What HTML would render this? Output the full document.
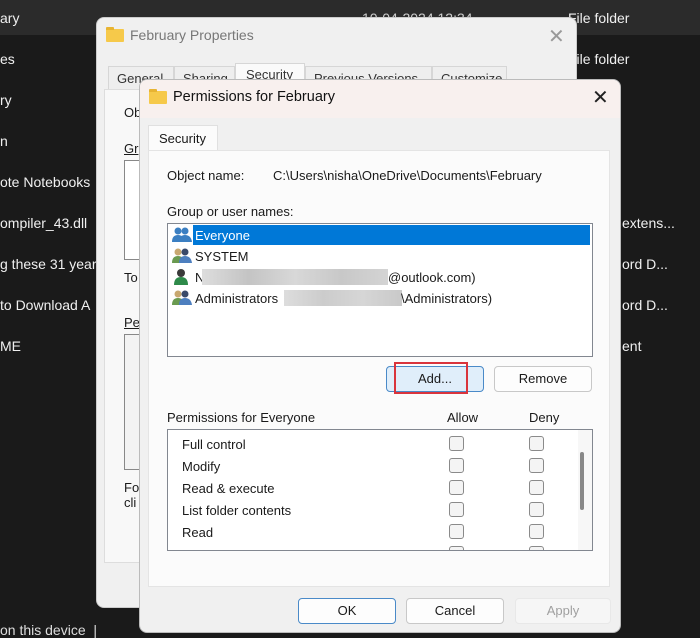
<!DOCTYPE html>
<html><head><meta charset="utf-8">
<style>
*{margin:0;padding:0;box-sizing:border-box}
body{width:700px;height:637px;overflow:hidden;background:#1a1a1a;font-family:"Liberation Sans",sans-serif;font-size:13px;color:#1a1a1a;position:relative}
.a{position:absolute;white-space:nowrap}
.bg{color:#f0f0f0;font-size:14px}
.btn{position:absolute;height:26px;border:1px solid #c8c8c8;border-radius:4px;background:#fdfdfd;text-align:center;line-height:24px;font-size:13px}
.cb{position:absolute;width:15px;height:15px;border:1px solid #8a8a8a;border-radius:3px;background:#f4f4f4}
.fold{position:absolute;width:18px;height:13px;background:#f6c94a;border-radius:1px}
.fold:before{content:"";position:absolute;left:0;top:-2px;width:8px;height:3px;background:#e8b432;border-radius:1px 1px 0 0}
</style></head><body>
<!-- explorer background -->
<div class="a" style="left:0;top:0;width:700px;height:35px;background:#2b2b2b"></div>
<div class="a bg" style="left:0;top:10px">ary</div>
<div class="a bg" style="left:362px;top:10px;color:#ccc">10-04-2024 12:34</div>
<div class="a bg" style="left:568px;top:10px">File folder</div>
<div class="a bg" style="left:0;top:51px">es</div>
<div class="a bg" style="left:568px;top:51px">File folder</div>
<div class="a bg" style="left:0;top:92px">ry</div>
<div class="a bg" style="left:0;top:133px">n</div>
<div class="a bg" style="left:0;top:174px">ote Notebooks</div>
<div class="a bg" style="left:0;top:215px">ompiler_43.dll</div>
<div class="a bg" style="left:622px;top:215px">extens...</div>
<div class="a bg" style="left:0;top:256px">g these 31 year</div>
<div class="a bg" style="left:622px;top:256px">ord D...</div>
<div class="a bg" style="left:0;top:297px">to Download A</div>
<div class="a bg" style="left:622px;top:297px">ord D...</div>
<div class="a bg" style="left:0;top:338px">ME</div>
<div class="a bg" style="left:622px;top:338px">ent</div>
<div class="a bg" style="left:0;top:622px;color:#ddd">on this device &nbsp;|</div>

<!-- Properties window -->
<div class="a" style="left:96px;top:17px;width:481px;height:591px;background:#f0f0f0;border-radius:8px;border:1px solid #ccc"></div>
<div class="fold" style="left:106px;top:29px"></div>
<div class="a" style="left:130px;top:27px;font-size:14px;color:#777">February Properties</div>
<div class="a" style="left:548px;top:24px;font-size:20px;color:#999">✕</div>
<div class="a" style="left:108px;top:66px;width:66px;height:24px;border:1px solid #d6d6d6;background:#eee;padding:4px 8px;color:#333">General</div>
<div class="a" style="left:174px;top:66px;width:61px;height:24px;border:1px solid #d6d6d6;background:#eee;padding:4px 8px;color:#333">Sharing</div>
<div class="a" style="left:235px;top:63px;width:70px;height:28px;border:1px solid #d6d6d6;background:#fafafa;padding:3px 10px;color:#333">Security</div>
<div class="a" style="left:305px;top:66px;width:127px;height:24px;border:1px solid #d6d6d6;background:#eee;padding:4px 8px;color:#333">Previous Versions</div>
<div class="a" style="left:432px;top:66px;width:75px;height:24px;border:1px solid #d6d6d6;background:#eee;padding:4px 8px;color:#333">Customize</div>
<div class="a" style="left:104px;top:89px;width:460px;height:474px;background:#f8f8f8;border:1px solid #ddd"></div>
<div class="a" style="left:124px;top:105px">Ob</div>
<div class="a" style="left:124px;top:141px;text-decoration:underline">Gr</div>
<div class="a" style="left:124px;top:160px;width:30px;height:100px;border:1px solid #888;background:#fff"></div>
<div class="a" style="left:124px;top:270px">To</div>
<div class="a" style="left:124px;top:315px;text-decoration:underline">Pe</div>
<div class="a" style="left:124px;top:334px;width:30px;height:136px;border:1px solid #888;background:#f3f3f3"></div>
<div class="a" style="left:124px;top:480px;line-height:15px">Fo<br>cli</div>

<!-- Permissions dialog -->
<div class="a" style="left:139px;top:79px;width:482px;height:554px;background:#f0f0f0;border-radius:8px;border:1px solid #bbb;overflow:hidden">
 <div style="position:absolute;left:0;top:0;width:100%;height:38px;background:#f8f0ee"></div>
</div>
<div class="fold" style="left:149px;top:91px"></div>
<div class="a" style="left:173px;top:89px;font-size:14.5px;color:#111">Permissions for February</div>
<div class="a" style="left:592px;top:85px;font-size:20px;color:#222">✕</div>
<div class="a" style="left:148px;top:125px;width:70px;height:26px;background:#fbfbfb;border:1px solid #e0e0e0;border-bottom:none;padding:5px 10px">Security</div>
<div class="a" style="left:148px;top:150px;width:462px;height:437px;background:#fbfbfb;border:1px solid #e4e4e4"></div>
<div class="a" style="left:167px;top:168px">Object name:</div>
<div class="a" style="left:273px;top:168px">C:\Users\nisha\OneDrive\Documents\February</div>
<div class="a" style="left:167px;top:204px">Group or user names:</div>
<div class="a" style="left:167px;top:223px;width:426px;height:134px;border:1px solid #828790;background:#fff"></div>
<div class="a" style="left:193px;top:225px;width:397px;height:20px;background:#0078d7"></div>
<svg class="a" style="left:172px;top:226px" width="20" height="82" viewBox="0 0 20 82">
 <g fill="#3b7fc2"><circle cx="6" cy="5" r="3.5"/><circle cx="13" cy="5" r="3.5"/><path d="M0 16q0-7 6-7t6 7zM7 16q0-7 6-7t7 7z"/></g>
 <g><circle cx="6" cy="26" r="3.5" fill="#c8a870"/><circle cx="13" cy="26" r="3.5" fill="#3a4a6a"/><path d="M0 37q0-7 6-7t6 7z" fill="#6a9a50"/><path d="M7 37q0-7 6-7t7 7z" fill="#4d7fbf"/></g>
 <g><circle cx="9" cy="47" r="4" fill="#3a3a3a"/><path d="M2 59q0-8 7-8t7 8z" fill="#2e8a4a"/></g>
 <g><circle cx="6" cy="68" r="3.5" fill="#c8a870"/><circle cx="13" cy="68" r="3.5" fill="#3a4a6a"/><path d="M0 79q0-7 6-7t6 7z" fill="#6a9a50"/><path d="M7 79q0-7 6-7t7 7z" fill="#4d7fbf"/></g>
</svg>
<div class="a" style="left:195px;top:228px;color:#fff">Everyone</div>
<div class="a" style="left:195px;top:249px">SYSTEM</div>
<div class="a" style="left:195px;top:270px">N</div>
<div class="a" style="left:202px;top:269px;width:186px;height:16px;background:linear-gradient(90deg,#ddd,#c4c4c4,#d8d8d8,#c8c8c8,#d4d4d4)"></div>
<div class="a" style="left:388px;top:270px">@outlook.com)</div>
<div class="a" style="left:195px;top:291px">Administrators</div>
<div class="a" style="left:284px;top:290px;width:118px;height:16px;background:linear-gradient(90deg,#ddd,#ccc,#d6d6d6,#c9c9c9)"></div>
<div class="a" style="left:401px;top:291px">\Administrators)</div>
<div class="btn" style="left:386px;top:366px;width:98px;background:#e0eefa;border-color:#4a8ac8">Add...</div>
<div class="a" style="left:394px;top:362px;width:74px;height:32px;border:2px solid #d9343c"></div>
<div class="btn" style="left:494px;top:366px;width:98px">Remove</div>
<div class="a" style="left:167px;top:410px">Permissions for Everyone</div>
<div class="a" style="left:447px;top:410px">Allow</div>
<div class="a" style="left:529px;top:410px">Deny</div>
<div class="a" style="left:167px;top:429px;width:426px;height:122px;border:1px solid #828790;background:#fff;overflow:hidden">
 <div style="position:absolute;left:410px;top:0;width:15px;height:120px;background:#f7f7f7"></div>
 <div style="position:absolute;left:412px;top:22px;width:4px;height:58px;background:#888;border-radius:2px"></div>
</div>
<div class="a" style="left:182px;top:437px">Full control</div>
<div class="a" style="left:182px;top:459px">Modify</div>
<div class="a" style="left:182px;top:481px">Read &amp; execute</div>
<div class="a" style="left:182px;top:503px">List folder contents</div>
<div class="a" style="left:182px;top:525px">Read</div>
<div class="cb" style="left:449px;top:436px"></div><div class="cb" style="left:529px;top:436px"></div>
<div class="cb" style="left:449px;top:458px"></div><div class="cb" style="left:529px;top:458px"></div>
<div class="cb" style="left:449px;top:480px"></div><div class="cb" style="left:529px;top:480px"></div>
<div class="cb" style="left:449px;top:502px"></div><div class="cb" style="left:529px;top:502px"></div>
<div class="cb" style="left:449px;top:524px"></div><div class="cb" style="left:529px;top:524px"></div>
<div class="a" style="left:168px;top:546px;width:400px;height:4px;overflow:hidden"><div class="cb" style="left:281px;top:0"></div><div class="cb" style="left:361px;top:0"></div></div>
<div class="btn" style="left:298px;top:598px;width:98px;border-color:#4a8ac8">OK</div>
<div class="btn" style="left:406px;top:598px;width:98px">Cancel</div>
<div class="btn" style="left:515px;top:598px;width:96px;color:#a0a0a0;background:#f6f6f6;border-color:#e8e8e8">Apply</div>
</body></html>
